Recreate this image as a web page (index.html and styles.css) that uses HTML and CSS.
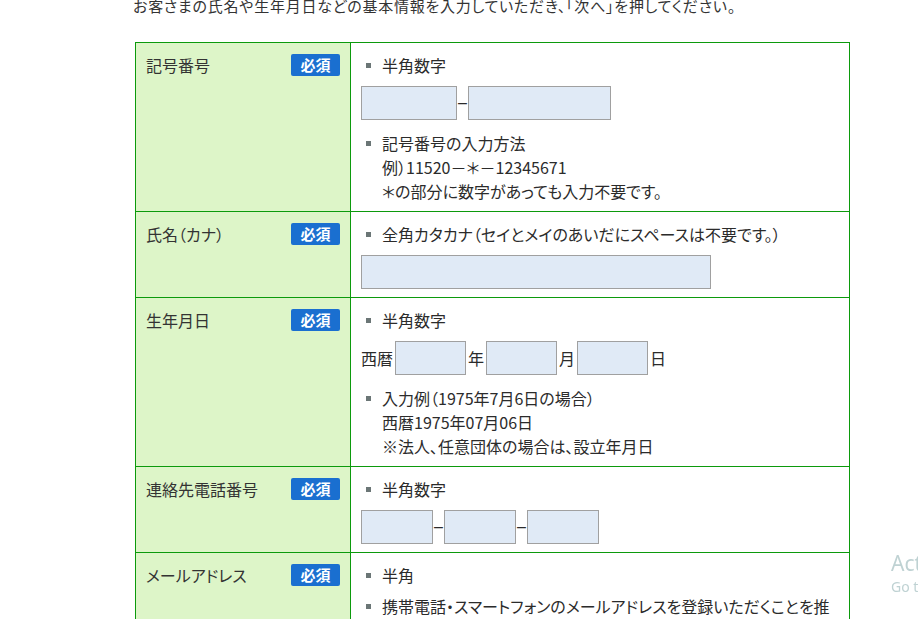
FILE: index.html
```html
<!DOCTYPE html>
<html lang="ja">
<head>
    <meta charset="UTF-8">
    <meta name="viewport" content="width=device-width, initial-scale=1.0">
    <title>基本情報の入力</title>
    <link rel="stylesheet" href="styles.css">
</head>
<body>
    <div class="container">
        <p class="intro">お客さまの氏名や生年月日などの基本情報を入力していただき、「次へ」を押してください。</p>
        <table class="form-table">
            <tr>
                <th><div class="label"><span>記号番号</span><span class="required">必須</span></div></th>
                <td>
                    <ul class="notes"><li><div>半角数字</div></li></ul>
                    <div class="field">
                        <input type="text" class="w96">
                        <span class="dash">–</span>
                        <input type="text" class="w143">
                    </div>
                    <ul class="notes">
                        <li><div>記号番号の入力方法<br>例）11520－＊－12345671<br>＊の部分に数字があっても入力不要です。</div></li>
                    </ul>
                </td>
            </tr>
            <tr>
                <th><div class="label"><span>氏名（カナ）</span><span class="required">必須</span></div></th>
                <td>
                    <ul class="notes"><li><div>全角カタカナ（セイとメイのあいだにスペースは不要です。）</div></li></ul>
                    <div class="field">
                        <input type="text" class="w350">
                    </div>
                </td>
            </tr>
            <tr>
                <th><div class="label"><span>生年月日</span><span class="required">必須</span></div></th>
                <td>
                    <ul class="notes"><li><div>半角数字</div></li></ul>
                    <div class="field date">
                        <span>西暦</span>
                        <input type="text" class="w71">
                        <span>年</span>
                        <input type="text" class="w71">
                        <span>月</span>
                        <input type="text" class="w71">
                        <span>日</span>
                    </div>
                    <ul class="notes">
                        <li><div>入力例（1975年7月6日の場合）<br>西暦1975年07月06日<br>※法人、任意団体の場合は、設立年月日</div></li>
                    </ul>
                </td>
            </tr>
            <tr>
                <th><div class="label"><span>連絡先電話番号</span><span class="required">必須</span></div></th>
                <td>
                    <ul class="notes"><li><div>半角数字</div></li></ul>
                    <div class="field">
                        <input type="text" class="w72">
                        <span class="dash">–</span>
                        <input type="text" class="w72">
                        <span class="dash">–</span>
                        <input type="text" class="w72">
                    </div>
                </td>
            </tr>
            <tr>
                <th><div class="label"><span>メールアドレス</span><span class="required">必須</span></div></th>
                <td>
                    <ul class="notes"><li><div>半角</div></li></ul>
                    <ul class="notes spaced">
                        <li><div>携帯電話・スマートフォンのメールアドレスを登録いただくことを推奨します。</div></li>
                    </ul>
                    <div class="field">
                        <input type="text" class="w350">
                    </div>
                </td>
            </tr>
        </table>
    </div>

    <div class="watermark">
        <div class="wm-title">Activate Windows</div>
        <div class="wm-sub">Go to Settings to activate Windows.</div>
    </div>
</body>
</html>
```

FILE: styles.css
```css
html {
    overflow: hidden;
}
body {
    font-family: "Noto Sans CJK JP", "Noto Sans", sans-serif;
    font-size: 16px;
    font-feature-settings: "palt";
    color: #2b2b2b;
    margin: 0;
    background-color: #fff;
}
.container {
    width: 715px;
    margin-left: 135px;
}
.intro {
    font-size: 15px;
    line-height: 20px;
    letter-spacing: 0.75px;
    margin: -4px 0 26px -2px;
    color: #333;
    white-space: nowrap;
}
.form-table {
    width: 715px;
    border-collapse: collapse;
}
.form-table th,
.form-table td {
    border: 1px solid #0c9a0c;
    vertical-align: top;
    text-align: left;
    font-weight: normal;
    padding: 10px 10px 8px;
}
.form-table th {
    width: 194px;
    background-color: #ddf5c8;
    color: #333;
}
.label {
    display: flex;
    justify-content: space-between;
    align-items: center;
    line-height: 24px;
}
.required {
    background-color: #1a6fd0;
    color: #fff;
    font-weight: bold;
    font-size: 15px;
    line-height: 22px;
    height: 22px;
    width: 49px;
    text-align: center;
    border-radius: 2px;
}
.notes {
    list-style: none;
    margin: 0;
    padding: 0;
    line-height: 24px;
}
.notes li {
    display: grid;
    grid-template-columns: 21px 1fr;
}
.notes li::before {
    content: "";
    width: 5px;
    height: 5px;
    margin: 10px 0 0 5px;
    background-color: #6b7676;
}
.notes.spaced {
    margin-top: 7px;
}
.field {
    display: flex;
    align-items: center;
    margin: 9px 0 11px;
}
.field:last-child {
    margin-bottom: 0;
}
.field input {
    height: 34px;
    box-sizing: border-box;
    border: 1px solid #a0a0a0;
    background-color: #e0eaf6;
    margin: 0;
    padding: 2px 4px;
    font-size: 15px;
}
.field.date {
    gap: 2px;
}
.dash {
    width: 11px;
    text-align: center;
    font-size: 16px;
    font-family: "Liberation Sans", sans-serif;
}
.w96 { width: 96px; }
.w143 { width: 143px; }
.w350 { width: 350px; }
.w71 { width: 71px; }
.w72 { width: 72px; }

.watermark {
    position: fixed;
    left: 891px;
    top: 548px;
    white-space: nowrap;
    font-family: "Noto Sans", sans-serif;
    color: #bfd2d3;
}
.wm-title {
    font-size: 21px;
    line-height: 30px;
}
.wm-sub {
    font-size: 14px;
    line-height: 18px;
}
```
